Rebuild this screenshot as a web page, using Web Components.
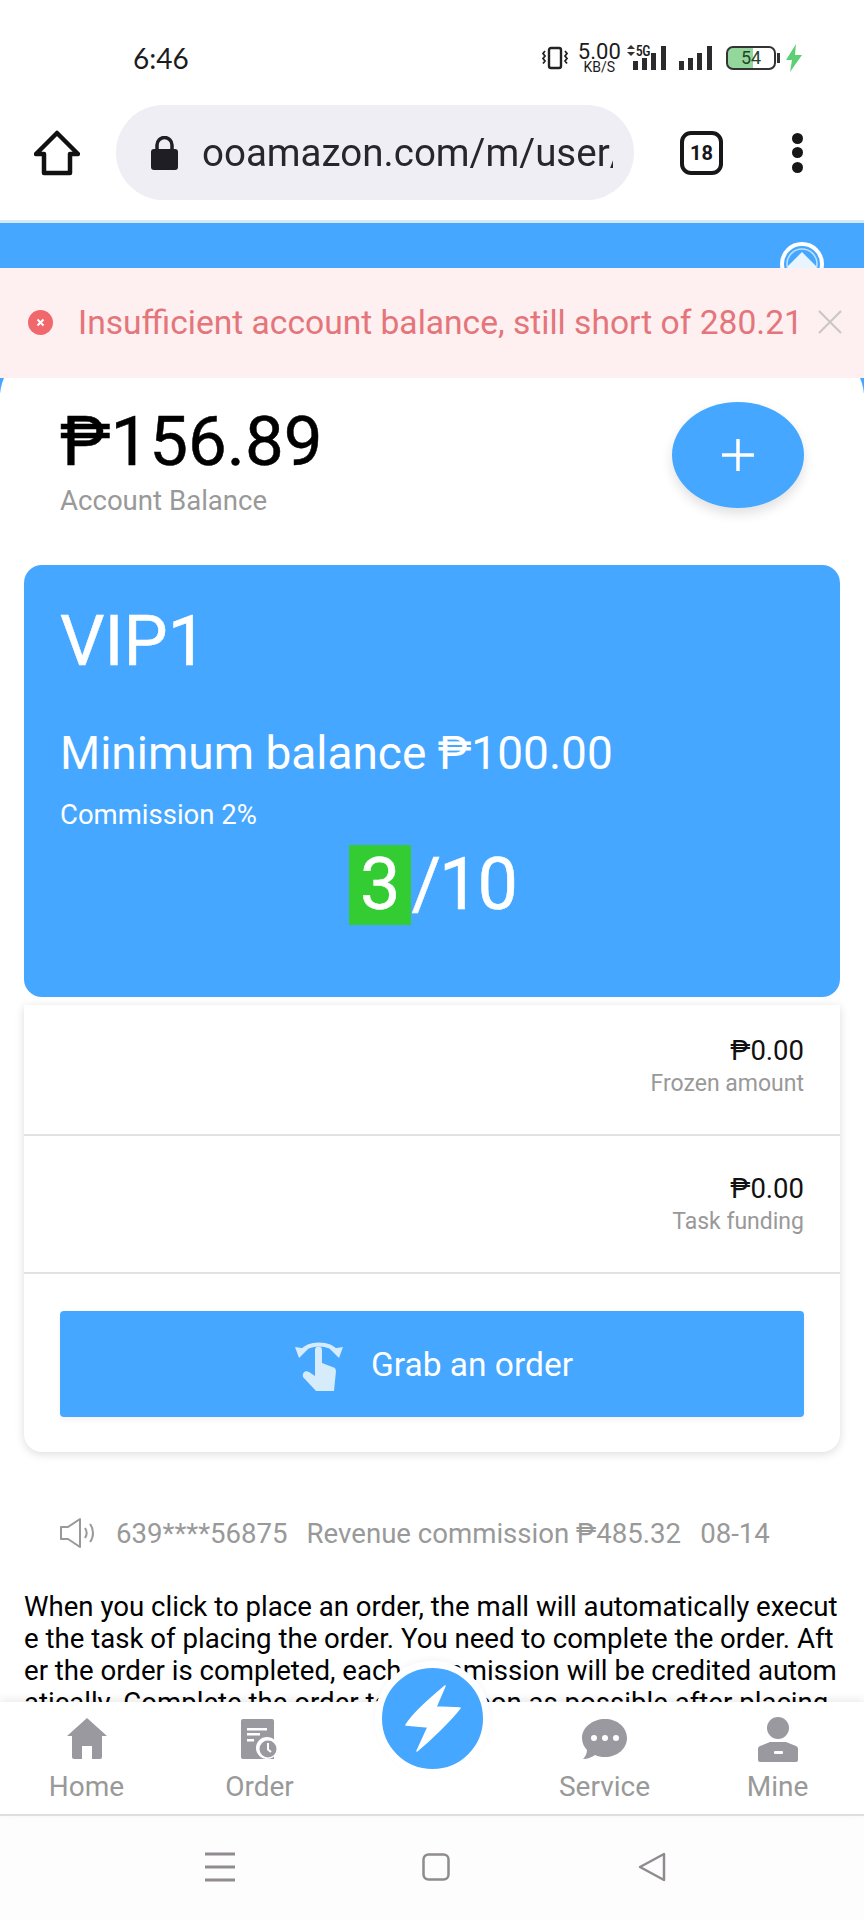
<!DOCTYPE html>
<html lang="en">
<head>
<meta charset="utf-8">
<title>Order</title>
<style>
  html,body{margin:0;height:100%;background:#fff}
  body{font-family:Roboto,"Liberation Sans",sans-serif;overflow:hidden}
  order-screen{height:1920px}
</style>
</head>
<body>
<order-screen></order-screen>
<script>
const BLUE = "#45a7ff";
const PESO = "\u20b1";

class StatusBar extends HTMLElement {
  constructor() { super(); this.attachShadow({ mode: "open" }); }
  connectedCallback() {
    this.shadowRoot.innerHTML = `
      <style>
        :host{display:flex;align-items:center;height:105px;box-sizing:border-box;padding:10px 64px 0 133px;background:#fff;color:#1c1c1e;font-family:Lato,Roboto,sans-serif}
        .time{font-size:28px;flex:1;line-height:1}
        .right{display:flex;align-items:center}
        .speed{display:flex;flex-direction:column;align-items:center;margin:0 6px 0 9px;font-family:Roboto,sans-serif}
        .speed b{font-weight:400;font-size:22px;line-height:19px}
        .speed i{font-style:normal;font-size:14px;line-height:12px}
        .net{display:flex;align-items:flex-start;height:26px;margin-right:-17px}
        .net span{font:500 14px/13px "Roboto Condensed",Roboto,sans-serif;letter-spacing:-.5px;margin-left:1px}
        .batt{display:flex;align-items:center;justify-content:center;box-sizing:border-box;width:50px;height:24px;border:2px solid #333;border-radius:7px;margin-left:13px;font:400 18px Roboto,sans-serif;background:linear-gradient(90deg,#94d79c 0 54%,#fff 54%);color:#24452b}
      </style>
      <div class="time">6:46</div>
      <div class="right">
        <svg width="28" height="24" viewBox="0 0 28 24" fill="none" stroke="#222" stroke-width="2.400"><rect x="8" y="2" width="12" height="20" rx="2"/><path d="M4 5l-2 2.500 2 2.500-2 2.500 2 2.500-2 2.500M24 5l2 2.500-2 2.500 2 2.500-2 2.500 2 2.500" stroke-width="1.800"/></svg>
        <div class="speed"><b>5.00</b><i>KB/S</i></div>
        <div class="net"><svg width="8" height="11" viewBox="0 0 8 11" fill="#333"><path d="M4 0L8 4H0zM4 11L0 7h8z"/></svg><span>5G</span></div>
        <svg width="34" height="26" viewBox="0 0 34 26" fill="#2b2b2e" style="margin-right:12px"><rect x="0" y="16" width="5" height="9"/><rect x="9" y="13" width="5" height="12"/><rect x="18" y="8" width="5" height="17"/><rect x="28" y="1" width="5" height="24"/></svg>
        <svg width="34" height="26" viewBox="0 0 34 26" fill="#2b2b2e"><rect x="0" y="16" width="5" height="9"/><rect x="9" y="13" width="5" height="12"/><rect x="18" y="8" width="5" height="17"/><rect x="28" y="1" width="5" height="24"/></svg>
        <div class="batt">54</div>
        <svg width="4" height="10" viewBox="0 0 4 10" style="margin-left:1px"><rect width="3" height="10" fill="#333"/></svg>
        <svg width="16" height="28" viewBox="0 0 16 28" fill="#5fcf75" style="margin-left:5px;margin-right:-2px"><path d="M10 0L0 16h6l-2 12L16 11H9z"/></svg>
      </div>`;
  }
}

class BrowserBar extends HTMLElement {
  constructor() { super(); this.attachShadow({ mode: "open" }); }
  connectedCallback() {
    this.shadowRoot.innerHTML = `
      <style>
        :host{display:flex;align-items:center;height:118px;box-sizing:border-box;padding:0 0 20px 34px;background:#fff;border-bottom:3px solid #d6e9f7}
        .url{display:flex;align-items:center;box-sizing:border-box;width:518px;height:95px;margin-left:36px;padding:0 21px 0 35px;border-radius:48px;background:#eeeef4}
        .txt{margin-left:24px;flex:1;overflow:hidden;white-space:nowrap;font-size:38.500px;color:#26262c;-webkit-mask-image:linear-gradient(90deg,#000 70%,#666 98%)}
        .tab{display:flex;align-items:center;justify-content:center;box-sizing:border-box;width:43px;height:44px;margin-left:46px;border:4px solid #17171a;border-radius:11px;font:700 20px Roboto,sans-serif;color:#17171a}
        .dots{display:flex;flex-direction:column;gap:3.500px;margin-left:69px}
        .dots i{width:11px;height:11px;border-radius:50%;background:#17171a}
      </style>
      <svg width="46" height="46" viewBox="0 0 46 46" fill="none" stroke="#111" stroke-width="4.500" stroke-linejoin="round"><path d="M23 3L44 24H36V43H10V24H2Z"/></svg>
      <div class="url">
        <svg width="27" height="34" viewBox="0 0 27 34"><path d="M6 15V9a7.500 7.500 0 0 1 15 0v6" fill="none" stroke="#1e1e24" stroke-width="3.500"/><rect y="13" width="27" height="21" rx="3" fill="#1e1e24"/></svg>
        <div class="txt">ooamazon.com/m/user/</div>
      </div>
      <div class="tab">18</div>
      <div class="dots"><i></i><i></i><i></i></div>`;
  }
}

class AlertToast extends HTMLElement {
  constructor() { super(); this.attachShadow({ mode: "open" }); }
  connectedCallback() {
    this.shadowRoot.innerHTML = `
      <style>
        :host{position:absolute;left:0;right:0;top:45px;height:110px;display:flex;align-items:center;box-sizing:border-box;padding:0 21px 2px 28px;background:#feeff0;color:#e4757a;font-size:33.600px;white-space:nowrap}
        span{flex:1;margin-left:25px}
      </style>
      <svg width="25" height="25" viewBox="0 0 25 25"><circle cx="12.500" cy="12.500" r="12.500" fill="#f0686c"/><path d="M9.500 9.500l6 6M15.500 9.500l-6 6" stroke="#fff" stroke-width="2"/></svg>
      <span><slot></slot></span>
      <svg width="26" height="26" viewBox="0 0 26 26"><path d="M2 2l22 22M24 2L2 24" stroke="#c9c6c8" stroke-width="2" fill="none"/></svg>`;
  }
}

class BalanceHead extends HTMLElement {
  constructor() { super(); this.attachShadow({ mode: "open" }); }
  connectedCallback() {
    this.shadowRoot.innerHTML = `
      <style>
        :host{display:flex;align-items:flex-start;justify-content:space-between;padding:52px 60px 0;height:215px;box-sizing:border-box}
        .amt{font-size:69px;line-height:78px;color:#000;margin-top:1px;-webkit-text-stroke:.5px #000}
        .lbl{font-size:27.600px;line-height:30px;color:#999;margin-top:5px}
        .add{display:flex;align-items:center;justify-content:center;width:132px;height:106px;border-radius:50%;background:${BLUE};box-shadow:0 6px 12px rgba(0,0,0,.12)}
      </style>
      <div><div class="amt">${PESO}156.89</div><div class="lbl">Account Balance</div></div>
      <div class="add"><svg width="36" height="36" viewBox="0 0 36 36"><path d="M18 2v32M2 18h32" stroke="#fff" stroke-width="3.500"/></svg></div>`;
  }
}

class VipCard extends HTMLElement {
  constructor() { super(); this.attachShadow({ mode: "open" }); }
  connectedCallback() {
    this.shadowRoot.innerHTML = `
      <style>
        :host{display:block;position:relative;height:432px;box-sizing:border-box;padding:37px 36px 0;border-radius:18px;background:${BLUE};color:#fff}
        .lvl{font-size:70px;line-height:78px;-webkit-text-stroke:.5px #fff}
        .min{font-size:46px;line-height:54px;margin-top:46px}
        .com{font-size:27.500px;line-height:30px;margin-top:20px}
        .prog{display:flex;justify-content:center;font-size:72px;line-height:80px;margin-top:15px;-webkit-text-stroke:.5px #fff}
        .prog b{font-weight:400;background:#33cc33;padding:0 11px;margin-left:1px}
        .prog span{letter-spacing:-2px}
      </style>
      <div class="lvl">VIP1</div>
      <div class="min">Minimum balance ${PESO}100.00</div>
      <div class="com">Commission 2%</div>
      <div class="prog"><b>3</b><span>/10</span></div>`;
  }
}

class InfoRow extends HTMLElement {
  constructor() { super(); this.attachShadow({ mode: "open" }); }
  connectedCallback() {
    this.shadowRoot.innerHTML = `
      <style>
        :host{display:block;height:138px;box-sizing:border-box;padding:37px 36px 0;text-align:right;border-bottom:2px solid #e2e2e2}
        .v{font-size:27.500px;line-height:32px;color:#111}
        .k{font-size:23px;line-height:30px;color:#999;margin-top:2px}
      </style>
      <div class="v">${this.getAttribute("value")}</div>
      <div class="k">${this.getAttribute("label")}</div>`;
  }
}

class GrabButton extends HTMLElement {
  constructor() { super(); this.attachShadow({ mode: "open" }); }
  connectedCallback() {
    this.shadowRoot.innerHTML = `
      <style>
        :host{display:flex;align-items:center;justify-content:center;gap:28px;height:106px;padding-left:4px;margin:0 36px;border-radius:4px;background:${BLUE};color:#fff;font-size:33.500px;box-shadow:0 3px 6px rgba(0,0,0,.05)}
      </style>
      <svg width="48" height="54" viewBox="0 0 48 54" fill="#d6ecfb"><path d="M6 15C14 5 34 5 42 15" fill="none" stroke="#d6ecfb" stroke-width="4"/><path d="M0 10l13 2-9 9zM48 10l-13 2 9 9z"/><path d="M20 13a3.500 3.500 0 0 1 7 0V26l13 5 1 3-2 20H21L8 40c-1-4 2-7 6-5l6 4z"/></svg>
      <span><slot></slot></span>`;
  }
}

class NoticeLine extends HTMLElement {
  constructor() { super(); this.attachShadow({ mode: "open" }); }
  connectedCallback() {
    this.shadowRoot.innerHTML = `
      <style>
        :host{display:flex;align-items:center;gap:19px;padding-left:36px;height:40px;color:#999;font-size:27.600px;white-space:nowrap}
        svg{margin-right:1px}
      </style>
      <svg width="36" height="32" viewBox="0 0 36 32" fill="none" stroke="#999" stroke-width="2"><path d="M1 10h7L20 2v28L8 22H1z" stroke-linejoin="round"/><path d="M25 11c2 3 2 7 0 10M30 7c4 5 4 13 0 18"/></svg>
      <span>639****56875</span><span>Revenue commission ${PESO}485.32</span><span>08-14</span>`;
  }
}

class TabItem extends HTMLElement {
  constructor() { super(); this.attachShadow({ mode: "open" }); }
  connectedCallback() {
    this.shadowRoot.innerHTML = `
      <style>
        :host{display:flex;flex-direction:column;align-items:center;width:173px;color:#999;font-size:28px}
        .i{height:48px;display:flex;align-items:flex-end}
        .t{margin-top:12px;line-height:32px}
      </style>
      <div class="i"><slot></slot></div>
      <div class="t">${this.getAttribute("label")}</div>`;
  }
}

class TabBar extends HTMLElement {
  constructor() { super(); this.attachShadow({ mode: "open" }); }
  connectedCallback() {
    this.shadowRoot.innerHTML = `
      <style>
        :host{position:relative;display:flex;height:114px;box-sizing:border-box;padding-top:9px;background:#fff;border-bottom:2px solid #dfdfdf;box-shadow:0 -3px 8px rgba(0,0,0,.08)}
        .gap{flex:1}
        .bolt{position:absolute;left:375px;top:-41px;display:flex;align-items:center;justify-content:center;width:101px;height:101px;border-radius:50%;background:${BLUE};border:7px solid #fff;box-shadow:0 -2px 6px rgba(0,0,0,.04)}
      </style>
      <slot name="left"></slot><div class="gap"></div><slot name="right"></slot>
      <div class="bolt"><svg width="56" height="67" viewBox="0 0 56 67" fill="#fff" stroke="#fff" stroke-width="1.500" stroke-linejoin="round"><path d="M40 1C28 11 8 28 1 40L23 42 12 66C25 55 46 35 55 23L31 22Z"/></svg></div>`;
  }
}

class NavBar extends HTMLElement {
  constructor() { super(); this.attachShadow({ mode: "open" }); }
  connectedCallback() {
    this.shadowRoot.innerHTML = `
      <style>
        :host{display:block;height:104px;background:#fefdfe}
        .row{display:flex;align-items:center;height:104px;padding:0 0 0 205px;box-sizing:border-box;margin-top:-1px}
        .sq{margin-left:187px}
        .bk{margin-left:188px}
      </style>
      <div class="row">
        <svg width="30" height="30" viewBox="0 0 30 30" stroke="#8f8b8f" stroke-width="3"><path d="M0 2h30M0 15h30M0 28h30"/></svg>
        <svg class="sq" width="28" height="28" viewBox="0 0 28 28" fill="none" stroke="#8f8b8f" stroke-width="2.500"><rect x="1.500" y="1.500" width="25" height="25" rx="5"/></svg>
        <svg class="bk" width="28" height="30" viewBox="0 0 28 30" fill="none" stroke="#8f8b8f" stroke-width="2.500" stroke-linejoin="round"><path d="M26 2V28L2 15Z"/></svg>
      </div>`;
  }
}

class OrderScreen extends HTMLElement {
  constructor() { super(); this.attachShadow({ mode: "open" }); }
  connectedCallback() {
    this.shadowRoot.innerHTML = `
      <style>
        :host{display:flex;flex-direction:column;width:864px;overflow:hidden;background:#fff}
        .page{position:relative;flex:1;min-height:0;overflow:hidden;background:#fff}
        .top{display:flex;justify-content:flex-end;height:170px;background:${BLUE};padding:19px 40px 0 0;box-sizing:border-box}
        .panel{position:relative;margin-top:-43px;border-radius:47px 47px 0 0;background:#fff}
        .main{padding:0 24px}
        .card{display:flex;flex-direction:column;margin-top:8px;height:447px;border-radius:0 0 18px 18px;background:#fff;box-shadow:0 2px 10px rgba(0,0,0,.14)}
        .card info-row:first-child{margin-top:-7px}
        .btnwrap{padding-top:37px}
        notice-line{margin-top:61px}
        .copy{margin:38px 0 0;font-size:27.600px;line-height:32px;color:#000;word-break:break-all}
      </style>
      <status-bar></status-bar>
      <browser-bar></browser-bar>
      <div class="page">
        <div class="top"><svg width="44" height="44" viewBox="0 0 44 44" fill="none"><circle cx="22" cy="22" r="20" stroke="#fff" stroke-width="4"/><circle cx="22" cy="22" r="15" stroke="#bfe0fb" stroke-width="1.500"/><path d="M8 24L22 10l14 14v6H8z" fill="#e8f4fe"/></svg></div>
        <div class="panel">
          <balance-head></balance-head>
          <div class="main">
            <vip-card></vip-card>
            <div class="card">
              <info-row value="${PESO}0.00" label="Frozen amount"></info-row>
              <info-row value="${PESO}0.00" label="Task funding"></info-row>
              <div class="btnwrap"><grab-button>Grab an order</grab-button></div>
            </div>
            <notice-line></notice-line>
            <div class="copy">When you click to place an order, the mall will automatically execute the task of placing the order. You need to complete the order. After the order is completed, each commission will be credited automatically. Complete the order task as soon as possible after placing</div>
          </div>
        </div>
        <alert-toast>Insufficient account balance, still short of 280.21</alert-toast>
      </div>
      <tab-bar>
        <tab-item slot="left" label="Home"><svg width="40" height="41" viewBox="0 0 40 41" fill="#9a99a0"><path d="M20 0L40 18H35V39a2 2 0 0 1-2 2H25V28H15V41H7a2 2 0 0 1-2-2V18H0Z"/></svg></tab-item>
        <tab-item slot="left" label="Order"><svg width="37" height="40" viewBox="0 0 37 40"><path d="M2 0H31a2 2 0 0 1 2 2V40H2a2 2 0 0 1-2-2V2A2 2 0 0 1 2 0Z" fill="#9a99a0"/><path d="M6 9h20v2.500H6zM6 14h13v2.500H6zM6 20h7v2.500H6z" fill="#fff"/><circle cx="26" cy="29" r="11" fill="#fff"/><circle cx="27" cy="30" r="8.500" fill="#9a99a0"/><path d="M27 24v6.500l3 2.500" stroke="#fff" stroke-width="2" fill="none"/></svg></tab-item>
        <tab-item slot="right" label="Service"><svg width="45" height="40" viewBox="0 0 45 40" fill="#9a99a0"><path d="M23 0C35 0 45 8 45 19S35 38 23 38c-4 0-7-.5-10-2-3 2-7 4-12 4 2-2 4-5 4-9C2 28 0 24 0 19 0 8 11 0 23 0Z"/><circle cx="12" cy="19" r="3" fill="#fff"/><circle cx="23" cy="19" r="3" fill="#fff"/><circle cx="34" cy="19" r="3" fill="#fff"/></svg></tab-item>
        <tab-item slot="right" label="Mine"><svg width="40" height="45" viewBox="0 0 40 45" fill="#9a99a0" style="margin-bottom:-3px"><circle cx="20" cy="11" r="11"/><path d="M12 25H28L38 29a3 3 0 0 1 2 3V43a2 2 0 0 1-2 2H2a2 2 0 0 1-2-2V32a3 3 0 0 1 2-3Z"/><rect x="23" y="34" width="9" height="3" rx="1" transform="translate(-7 0)" fill="#fff"/></svg></tab-item>
      </tab-bar>
      <nav-bar></nav-bar>`;
  }
}

customElements.define("status-bar", StatusBar);
customElements.define("browser-bar", BrowserBar);
customElements.define("alert-toast", AlertToast);
customElements.define("balance-head", BalanceHead);
customElements.define("vip-card", VipCard);
customElements.define("info-row", InfoRow);
customElements.define("grab-button", GrabButton);
customElements.define("notice-line", NoticeLine);
customElements.define("tab-item", TabItem);
customElements.define("tab-bar", TabBar);
customElements.define("nav-bar", NavBar);
customElements.define("order-screen", OrderScreen);
</script>
</body>
</html>
